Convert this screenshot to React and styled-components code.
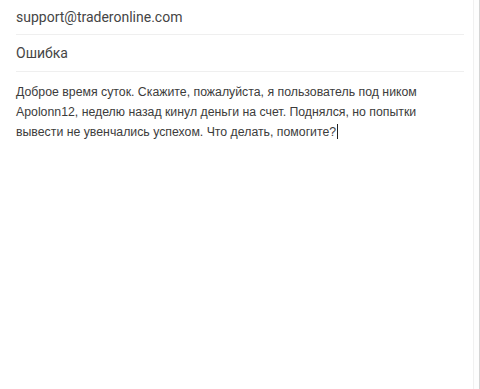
import React from "react";
import styled, { createGlobalStyle } from "styled-components";

const Global = createGlobalStyle`
	html, body {
		margin: 0;
		padding: 0;
		background: #fff;
	}
`;

const Window = styled.div`
	width: 480px;
	height: 389px;
	box-sizing: border-box;
	display: flex;
	background: #fff;
`;

const Compose = styled.div`
	flex: 1;
	padding: 0 9px 0 16px;
	border-right: 1px solid #f0f0f0;
`;

const Edge = styled.div`
	width: 5px;
	border-right: 1px solid #d4d4d4;
	background: #fdfdfd;
`;

const Field = styled.div`
	box-sizing: border-box;
	display: flex;
	align-items: center;
	border-bottom: 1px solid #efefef;
	font-family: Roboto, "Liberation Sans", sans-serif;
	font-size: 14px;
	color: #454545;
	padding-bottom: ${(p) => (p.$first ? "0" : "1px")};
	height: ${(p) => (p.$first ? "35px" : "37px")};
`;

const Body = styled.div`
	padding-top: 10px;
	font-family: "Liberation Sans", Arial, sans-serif;
	font-size: 12.3px;
	line-height: 20px;
	color: #3c3c3c;
`;

const Caret = styled.span`
	display: inline-block;
	width: 1px;
	height: 15px;
	background: #222;
	vertical-align: -3px;
	margin-left: 1px;
`;

export default function App() {
	return (
		<>
			<Global />
			<Window>
				<Compose>
					<Field $first>support@traderonline.com</Field>
					<Field>Ошибка</Field>
					<Body>
						Доброе время суток. Скажите, пожалуйста, я пользователь под ником
						<br />
						Apolonn12, неделю назад кинул деньги на счет. Поднялся, но попытки
						<br />
						вывести не увенчались успехом. Что делать, помогите?
						<Caret />
					</Body>
				</Compose>
				<Edge />
			</Window>
		</>
	);
}
